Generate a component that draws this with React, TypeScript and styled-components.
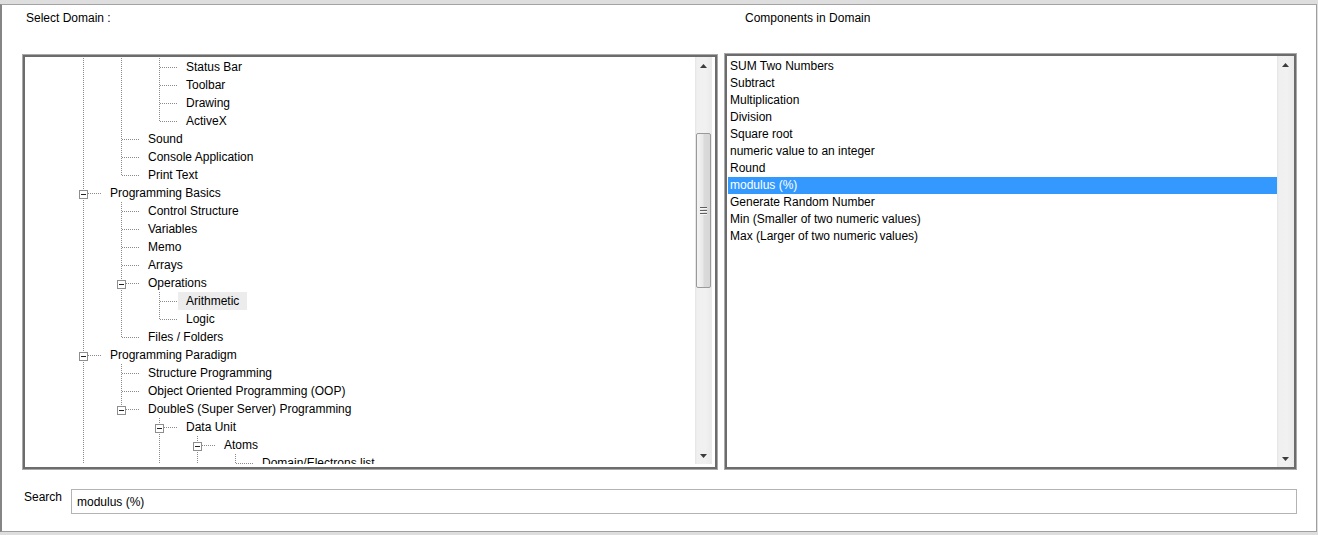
import React from "react";
import styled, { createGlobalStyle, css } from "styled-components";

const GlobalStyle = createGlobalStyle`
  html, body { margin: 0; padding: 0; background: #dedede; }
  body { font-family: "Liberation Sans", Arial, sans-serif; font-size: 12px; color: #000; }
  * { box-sizing: border-box; }
`;

const Frame = styled.main`
  margin-top: 4px;
  width: 1317px;
  height: 528px;
  background: #fff;
  border-top: 1px solid #a3a3a3;
  border-left: 2px solid #858585;
  border-right: 1px solid #9f9f9f;
  border-bottom: 1px solid #9f9f9f;
  display: flex;
  flex-direction: column;
`;

const Columns = styled.div`
  display: grid;
  grid-template-columns: 696px 573px;
  column-gap: 6px;
  padding-left: 20px;
  align-items: start;
`;

const Panel = styled.section`
  display: flex;
  flex-direction: column;
`;

const PanelTitle = styled.h2<{ $indent: number; $height: number }>`
  margin: 0;
  font: inherit;
  font-weight: normal;
  height: ${(p) => p.$height}px;
  padding: 6px 0 0 ${(p) => p.$indent}px;
  line-height: 14px;
`;

const Bevel = styled.div<{ $height: number }>`
  height: ${(p) => p.$height}px;
  border: 1px solid #a9a9a9;
  background: #fff;
  display: flex;
`;

const BevelInner = styled.div<{ $padRight: number; $padBottom: number }>`
  flex: 1;
  min-width: 0;
  display: flex;
  border: 2px solid #6c6c6c;
  padding: 0 ${(p) => p.$padRight}px ${(p) => p.$padBottom}px 0;
`;

/* ---------- scrollbar ---------- */
const ScrollBar = styled.div`
  width: 17px;
  flex: none;
  display: flex;
  flex-direction: column;
  background: linear-gradient(to right, #e4e4e4 0, #f0f0f0 2px, #f1f1f1 60%, #eaeaea 100%);
`;

const ArrowBtn = styled.div`
  height: 17px;
  flex: none;
  display: flex;
  align-items: center;
  justify-content: center;
`;

const Track = styled.div`
  flex: 1;
  min-height: 0;
`;

const Thumb = styled.div<{ $offset: number; $size: number }>`
  margin: ${(p) => p.$offset}px 1px 0 1px;
  height: ${(p) => p.$size}px;
  border: 1px solid #9a9a9a;
  border-radius: 2px;
  background: linear-gradient(to right, #f4f4f4 0, #e9e9e9 45%, #dadada 55%, #d7d7d7 100%);
  display: flex;
  align-items: center;
  justify-content: center;
`;

const Arrow = ({ down }: { down?: boolean }) => (
  <svg width="7" height="4" viewBox="0 0 7 4">
    <polygon points={down ? "0,0 7,0 3.5,4" : "0,4 7,4 3.5,0"} fill="#3c3c3c" />
  </svg>
);

const Grip = () => (
  <svg width="7" height="8" viewBox="0 0 7 8">
    {[0, 3, 6].map((y) => (
      <g key={y}>
        <rect x="0" y={y} width="7" height="1" fill="#5f5f5f" />
        <rect x="0" y={y + 1} width="7" height="1" fill="#f6f6f6" />
      </g>
    ))}
  </svg>
);

const VScroll = ({ thumb }: { thumb?: { offset: number; size: number } }) => (
  <ScrollBar>
    <ArrowBtn>
      <Arrow />
    </ArrowBtn>
    <Track>
      {thumb && (
        <Thumb $offset={thumb.offset} $size={thumb.size}>
          <Grip />
        </Thumb>
      )}
    </Track>
    <ArrowBtn>
      <Arrow down />
    </ArrowBtn>
  </ScrollBar>
);

/* ---------- tree ---------- */
const dotV = "repeating-linear-gradient(to bottom, #8a8a8a 0 1px, transparent 1px 2px)";
const dotH = "repeating-linear-gradient(to right, #8a8a8a 0 1px, transparent 1px 2px)";

const TreeBody = styled.div`
  flex: 1;
  min-width: 0;
  overflow: hidden;
  padding: 1px 0 0 1px;
`;

const TreeRow = styled.div`
  display: flex;
  height: 18px;
  white-space: nowrap;
`;

const Guide = styled.span<{ $line: boolean }>`
  width: 38px;
  flex: none;
  ${(p) =>
    p.$line &&
    css`
      background: ${dotV} 19px 0 / 1px 100% no-repeat;
    `}
`;

const Connector = styled.span<{ $last: boolean }>`
  width: 38px;
  flex: none;
  position: relative;
  background:
    ${dotV} 19px 0 / 1px ${(p) => (p.$last ? "10px" : "100%")} no-repeat,
    ${dotH} 20px 9px / 18px 1px no-repeat;
`;

const ExpandBox = styled.span`
  position: absolute;
  left: 15px;
  top: 6px;
  width: 9px;
  height: 9px;
  border: 1px solid #8e8e8e;
  background: #fff;
  display: flex;
  align-items: center;
  justify-content: center;
  &::after {
    content: "";
    width: 5px;
    height: 1px;
    background: #222;
  }
`;

const NodeLabel = styled.span<{ $hl?: boolean }>`
  padding: 0 8px;
  line-height: 18px;
  background: ${(p) => (p.$hl ? "#ececec" : "transparent")};
`;

type Node = {
  label: string;
  depth: number;
  guides: number[];
  last?: boolean;
  open?: boolean;
  hl?: boolean;
};

const treeRows: Node[] = [
  { label: "Status Bar", depth: 3, guides: [1, 2] },
  { label: "Toolbar", depth: 3, guides: [1, 2] },
  { label: "Drawing", depth: 3, guides: [1, 2] },
  { label: "ActiveX", depth: 3, guides: [1, 2], last: true },
  { label: "Sound", depth: 2, guides: [1] },
  { label: "Console Application", depth: 2, guides: [1] },
  { label: "Print Text", depth: 2, guides: [1], last: true },
  { label: "Programming Basics", depth: 1, guides: [], open: true },
  { label: "Control Structure", depth: 2, guides: [1] },
  { label: "Variables", depth: 2, guides: [1] },
  { label: "Memo", depth: 2, guides: [1] },
  { label: "Arrays", depth: 2, guides: [1] },
  { label: "Operations", depth: 2, guides: [1], open: true },
  { label: "Arithmetic", depth: 3, guides: [1, 2], hl: true },
  { label: "Logic", depth: 3, guides: [1, 2], last: true },
  { label: "Files / Folders", depth: 2, guides: [1], last: true },
  { label: "Programming Paradigm", depth: 1, guides: [], open: true },
  { label: "Structure Programming", depth: 2, guides: [1] },
  { label: "Object Oriented Programming (OOP)", depth: 2, guides: [1] },
  { label: "DoubleS (Super Server) Programming", depth: 2, guides: [1], open: true, last: true },
  { label: "Data Unit", depth: 3, guides: [1], open: true },
  { label: "Atoms", depth: 4, guides: [1, 3], open: true },
  { label: "Domain/Electrons list", depth: 5, guides: [1, 3, 4] },
];

const Tree = () => (
  <TreeBody>
    {treeRows.map((n) => (
      <TreeRow key={n.label}>
        {Array.from({ length: n.depth }, (_, k) => (
          <Guide key={k} $line={n.guides.includes(k)} />
        ))}
        <Connector $last={!!n.last}>{n.open && <ExpandBox />}</Connector>
        <NodeLabel $hl={n.hl}>{n.label}</NodeLabel>
      </TreeRow>
    ))}
  </TreeBody>
);

/* ---------- list ---------- */
const List = styled.ul`
  flex: 1;
  min-width: 0;
  margin: 0;
  padding: 2px 0 0 1px;
  list-style: none;
  overflow: hidden;
`;

const ListItem = styled.li<{ $selected?: boolean }>`
  height: 17px;
  line-height: 17px;
  padding-left: 2px;
  white-space: nowrap;
  background: ${(p) => (p.$selected ? "#3399ff" : "transparent")};
  color: ${(p) => (p.$selected ? "#fff" : "#000")};
`;

const components = [
  "SUM Two Numbers",
  "Subtract",
  "Multiplication",
  "Division",
  "Square root",
  "numeric value to an integer",
  "Round",
  "modulus (%)",
  "Generate Random Number",
  "Min (Smaller of two numeric values)",
  "Max (Larger of two numeric values)",
];

/* ---------- search ---------- */
const SearchRow = styled.div`
  display: flex;
  align-items: flex-start;
  padding-left: 22px;
  margin-top: 19px;
`;

const SearchLabel = styled.label`
  width: 47px;
  padding-top: 1px;
  line-height: 14px;
`;

const SearchInput = styled.input`
  width: 1226px;
  height: 25px;
  margin: 0;
  border: 1px solid #b3b3b3;
  padding: 0 0 0 5px;
  font: inherit;
  color: #000;
  background: #fff;
  outline: none;
`;

export default function App() {
  const selected = "modulus (%)";
  return (
    <>
      <GlobalStyle />
      <Frame>
        <Columns>
          <Panel>
            <PanelTitle $indent={4} $height={49}>
              Select Domain :
            </PanelTitle>
            <Bevel $height={416}>
              <BevelInner $padRight={3} $padBottom={3}>
                <Tree />
                <VScroll thumb={{ offset: 59, size: 155 }} />
              </BevelInner>
            </Bevel>
          </Panel>
          <Panel>
            <PanelTitle $indent={21} $height={48}>
              Components in Domain
            </PanelTitle>
            <Bevel $height={417}>
              <BevelInner $padRight={0} $padBottom={0}>
                <List>
                  {components.map((c) => (
                    <ListItem key={c} $selected={c === selected}>
                      {c}
                    </ListItem>
                  ))}
                </List>
                <VScroll />
              </BevelInner>
            </Bevel>
          </Panel>
        </Columns>
        <SearchRow>
          <SearchLabel htmlFor="search">Search</SearchLabel>
          <SearchInput id="search" defaultValue="modulus (%)" />
        </SearchRow>
      </Frame>
    </>
  );
}
